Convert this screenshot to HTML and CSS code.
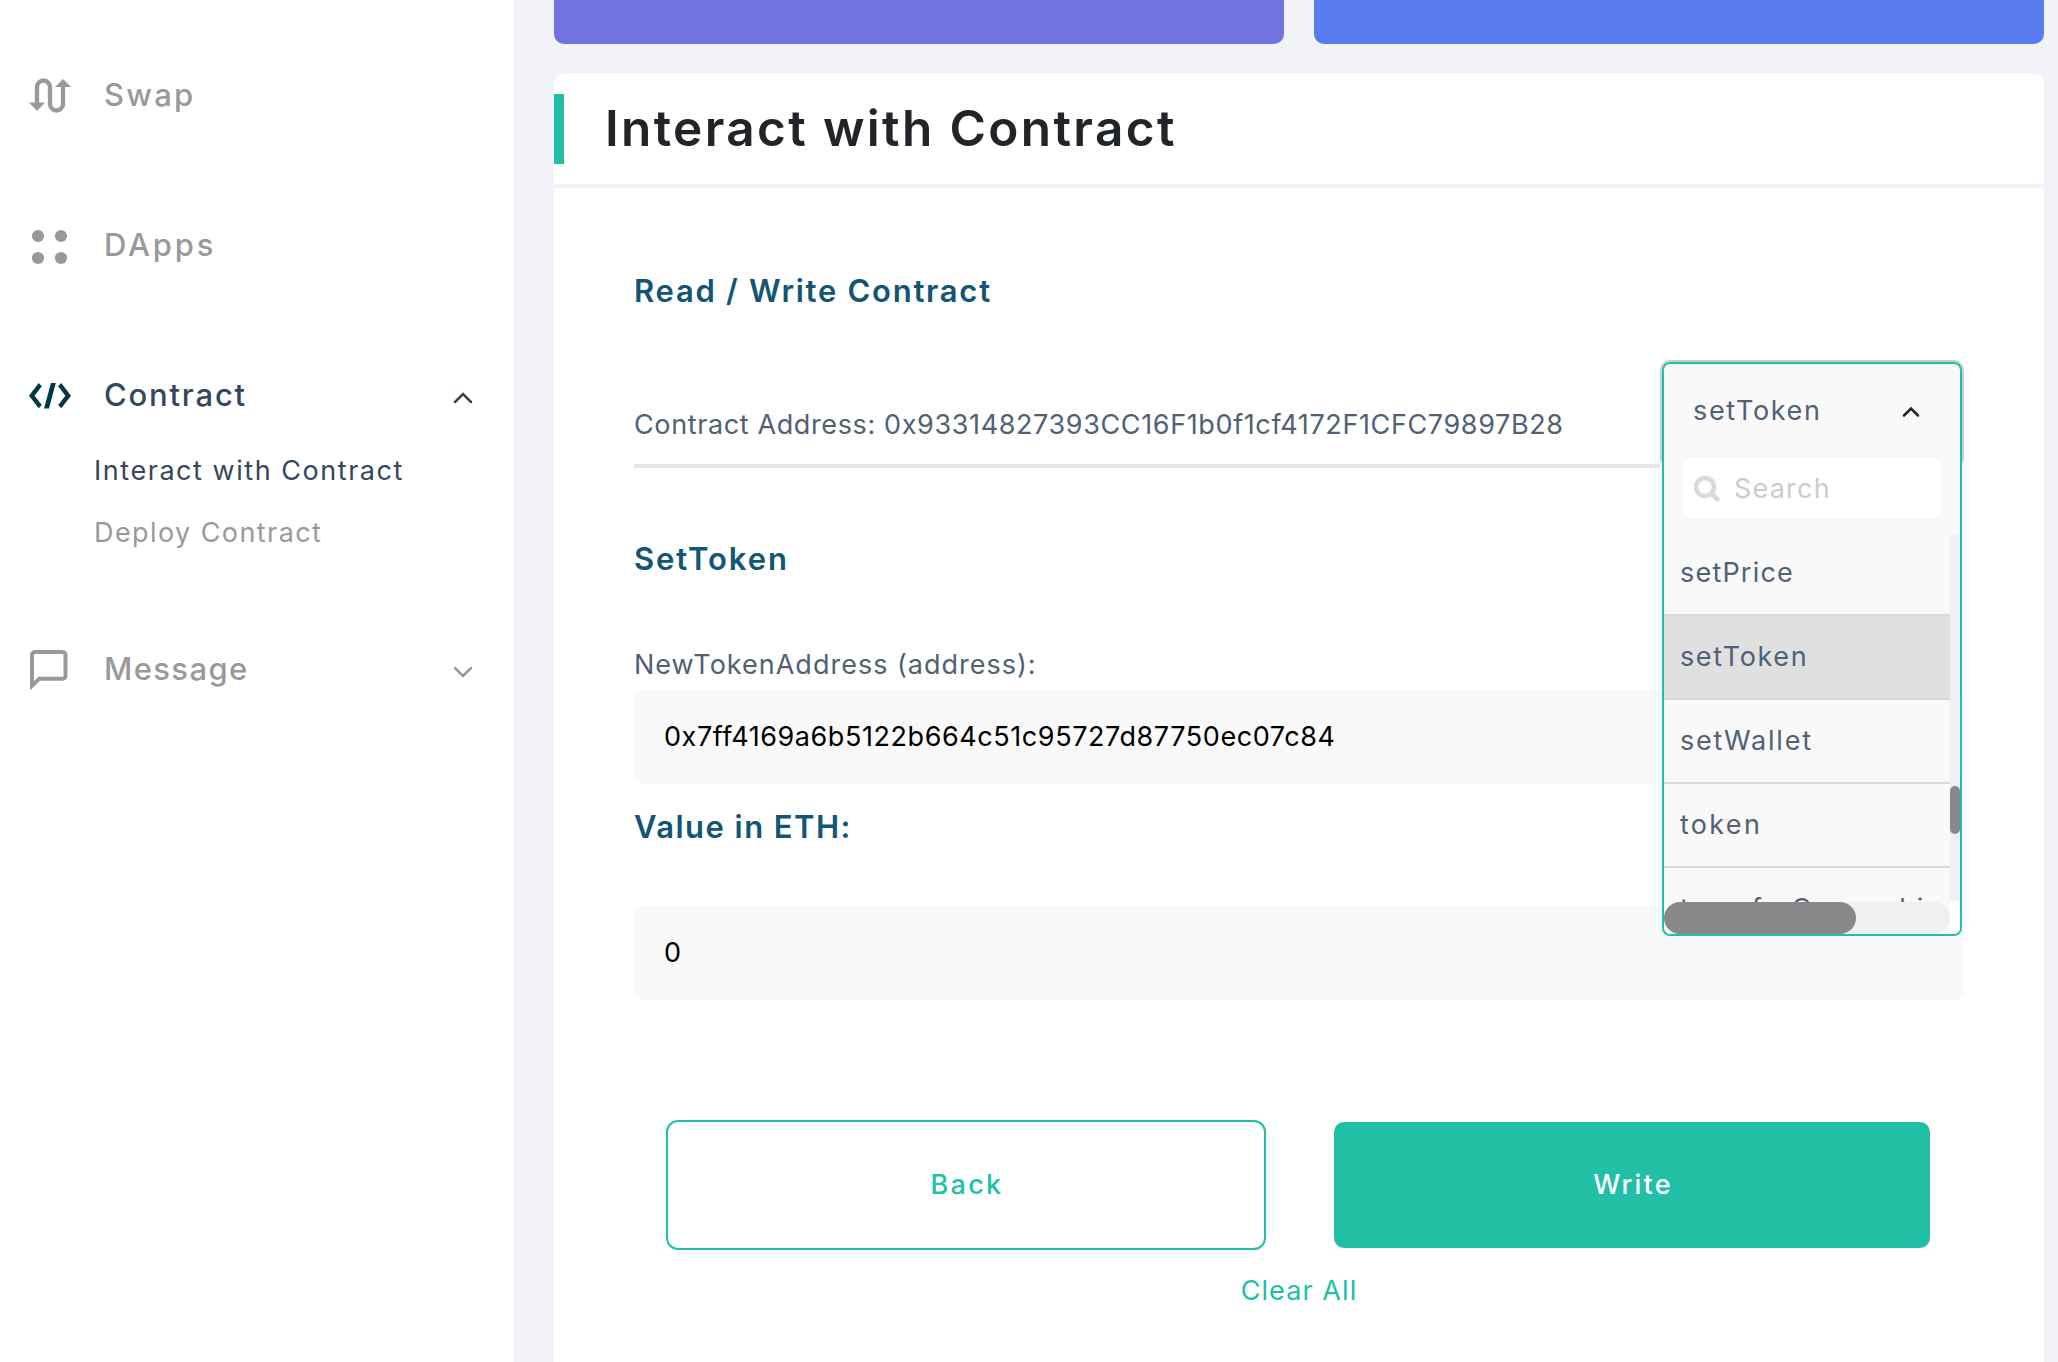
FILE: index.html
```html
<!DOCTYPE html>
<html lang="en">
<head>
<meta charset="utf-8">
<title>Interact with Contract</title>
<link rel="stylesheet" href="styles.css">
</head>
<body>
<div class="app">
  <nav class="sidebar">
    <a class="nav-item">
      <svg class="nav-icon" viewBox="0 0 42 42"><path d="M8 29V13a6.500 6.500 0 0 1 13 0V30a6.500 6.500 0 0 0 13 0V13" fill="none" stroke="currentColor" stroke-width="4.300"/><path d="M0 28.500h16L8 37zM26 13h16L34 5z" fill="currentColor"/></svg>
      <span class="ls-swap">Swap</span>
    </a>
    <a class="nav-item">
      <svg class="nav-icon" viewBox="0 0 42 42"><g fill="currentColor"><circle cx="9" cy="12" r="6.100"/><circle cx="32" cy="12" r="6.100"/><circle cx="9" cy="34" r="6.100"/><circle cx="32" cy="34" r="6.100"/></g></svg>
      <span class="ls-dapps">DApps</span>
    </a>
    <div class="nav-group">
      <a class="nav-item active">
        <svg class="nav-icon code" viewBox="0 0 42 42"><path d="M9.700 9.100l3.100 3.200-7.200 9.400 7.200 9.300-3.100 3.200L0 21.700zM32.300 9.100l-3.100 3.200 7.200 9.400-7.200 9.300 3.100 3.200L42 21.700zM22 9h4.800L20 34.500h-5z" fill="currentColor"/></svg>
        <span class="ls-contract">Contract</span>
        <svg class="nav-chevron" viewBox="0 0 20 12"><path d="M2 10l8-8 8 8" /></svg>
      </a>
      <a class="sub-item active">Interact with Contract</a>
      <a class="sub-item ls-deploy">Deploy Contract</a>
    </div>
    <a class="nav-item">
      <svg class="nav-icon" viewBox="0 0 42 42"><path d="M3 37.800V7a3 3 0 0 1 3-3H33.500a3 3 0 0 1 3 3V27.700a3 3 0 0 1-3 3H10.200z" fill="none" stroke="currentColor" stroke-width="4"/></svg>
      <span class="ls-message">Message</span>
      <svg class="nav-chevron" viewBox="0 0 20 12"><path d="M2 2l8 8 8-8" /></svg>
    </a>
  </nav>
  <main class="main">
    <div class="cards"><div class="card purple"></div><div class="card blue"></div></div>
    <section class="panel">
      <header class="panel-header"><h1>Interact with Contract</h1></header>
      <div class="panel-body">
        <h2 class="read-write">Read / Write Contract</h2>
        <div class="contract-row">
          <div class="address">Contract Address: 0x93314827393CC16F1b0f1cf4172F1CFC79897B28</div>
          <div class="select">
            <div class="dropdown">
              <div class="current"><span>setToken</span><svg viewBox="0 0 18 12"><path d="M2 9.500l7-7 7 7"/></svg></div>
              <div class="search">
                <svg viewBox="0 0 26 26"><circle cx="11" cy="11" r="9"/><path d="M17.500 17.500l6 6"/></svg>
                <span>Search</span>
              </div>
              <div class="list">
                <div class="options">
                  <div class="option ls-price">setPrice</div>
                  <div class="option selected">setToken</div>
                  <div class="option ls-wallet">setWallet</div>
                  <div class="option ls-token">token</div>
                  <div class="option ls-transfer">transferOwnership</div>
                </div>
                <div class="vtrack"><div class="vthumb"></div></div>
              </div>
              <div class="hscroll">
                <div class="htrack"><div class="hthumb"></div></div>
                <div class="corner"></div>
              </div>
            </div>
          </div>
        </div>
        <h2 class="method">SetToken</h2>
        <div class="label">NewTokenAddress (address):</div>
        <div class="input">0x7ff4169a6b5122b664c51c95727d87750ec07c84</div>
        <h2 class="value">Value in ETH:</h2>
        <div class="input eth">0</div>
        <div class="actions">
          <button class="btn back">Back</button>
          <button class="btn write">Write</button>
        </div>
        <a class="clear">Clear All</a>
      </div>
    </section>
  </main>
</div>
</body>
</html>
```
FILE: styles.css
```css
* { box-sizing: border-box; }
body { margin: 0; font-family: Inter, "Open Sans", sans-serif; font-size: 27px; overflow: hidden; }
h1, h2 { margin: 0; font-weight: 600; }
svg { display: block; flex: none; }
.app { display: flex; height: 1362px; overflow: hidden; background: #f2f3f9; }

/* Sidebar */
.sidebar { width: 514px; flex: none; padding: 65px 40px 0 29px; background: #fff; color: #999; }
.nav-item { display: flex; align-items: center; height: 60px; margin-bottom: 90px; font-size: 31px; font-weight: 500; white-space: nowrap; }
.nav-item span { padding-bottom: 2px; }
.nav-icon { width: 42px; height: 42px; margin-right: 33px; }
.nav-item.active { color: #34475b; margin-bottom: 14px; }
.nav-icon.code { color: #003945; }
.nav-chevron { width: 20px; height: 12px; margin: 5px 1px 0 auto; fill: none; stroke: currentColor; stroke-width: 2.5; stroke-linecap: round; }
.nav-group { margin-bottom: 76px; }
.sub-item { display: block; height: 62px; line-height: 64px; padding-left: 65px; letter-spacing: 1.54px; white-space: nowrap; }
.sub-item.active { color: #34475b; }
.ls-swap { letter-spacing: 2.23px; }
.ls-dapps { letter-spacing: 2.8px; }
.ls-contract { letter-spacing: 1.8px; }
.ls-message { letter-spacing: 1.38px; }
.sub-item.ls-deploy { letter-spacing: 1.42px; }

/* Main column */
.main { flex: 1; padding: 0 14px 0 40px; display: flex; flex-direction: column; gap: 30px; }
.cards { display: grid; grid-template-columns: 1fr 1fr; gap: 30px; height: 44px; flex: none; }
.card { border-radius: 0 0 10px 10px; }
.purple { background: #7173e0; }
.blue { background: #5a7bec; }
.panel { flex: 1; background: #fff; border-radius: 10px 10px 0 0; }
.panel-header { padding: 20px 0; border-bottom: 4px solid #f2f3f9; }
.panel-header h1 { height: 70px; line-height: 68px; padding-left: 41px; border-left: 10px solid #20bfa6; color: #212529; font-size: 49.5px; letter-spacing: 2.36px; white-space: nowrap; }
.panel-body { padding: 83px 80px 0; }
h2 { color: #125673; font-size: 31px; line-height: 40px; white-space: nowrap; }
.read-write { letter-spacing: 1.73px; }

.contract-row { display: flex; height: 108px; margin-top: 49px; align-items: flex-end; }
.address { flex: 1; padding-bottom: 19px; border-bottom: 4px solid #e6e6e6; line-height: 40px; color: #506175; letter-spacing: .62px; white-space: nowrap; }
.select { position: relative; width: 304px; height: 108px; border: 2px solid #ccc; border-bottom-color: transparent; border-radius: 10px; }

/* Open menu, drawn over the fields below it */
.dropdown { position: absolute; top: 0; left: 0; width: 300px; height: 574px; border: 2px solid #20bfa6; border-radius: 8px; background: #f9f9f9; color: #506175; overflow: hidden; }
.current { display: flex; justify-content: space-between; align-items: center; height: 92px; padding: 0 40px 0 29px; letter-spacing: 1.66px; }
.current svg { width: 18px; height: 12px; margin-top: 3px; fill: none; stroke: #222; stroke-width: 2.5; stroke-linecap: round; }
.search { display: flex; align-items: center; height: 60px; margin: 2px 20px 0 20px; padding-left: 10px; gap: 14px; border-radius: 8px; background: #fff; color: #ccc; letter-spacing: 1.2px; }
.search svg { width: 26px; height: 26px; margin-top: 2px; fill: none; stroke: #dadada; stroke-width: 4.5; stroke-linecap: round; }
.list { display: flex; height: 368px; margin-top: 16px; overflow: hidden; }
.options { flex: 1; min-width: 0; overflow: hidden; }
.option { height: 84px; padding-left: 16px; border-bottom: 2px solid #d9d9d9; line-height: 81px; letter-spacing: 1.62px; white-space: nowrap; }
.option:first-child { height: 82px; line-height: 77px; }
.option.selected { background: #e0e0e0; }
.option.ls-price { letter-spacing: 1.2px; }
.option.ls-wallet { letter-spacing: 1.8px; }
.option.ls-token { letter-spacing: 2.3px; }
.option.ls-transfer { letter-spacing: 1.5px; }
.vtrack { width: 10px; padding-top: 252px; background: #f0f0f0; border-radius: 5px; }
.vthumb { height: 48px; background: #888; border-radius: 5px; }
.hscroll { display: flex; height: 32px; }
.htrack { flex: 1; background: #f0f0f0; border-radius: 16px; }
.hthumb { width: 192px; height: 32px; background: #888; border-radius: 16px; }
.corner { width: 10px; background: #fff; }

.method { margin-top: 71px; letter-spacing: 1.9px; }
.label { margin-top: 65px; line-height: 41px; margin-bottom: -1px; color: #506175; letter-spacing: 1px; }
.input { height: 94px; margin-top: 6px; padding-left: 30px; line-height: 93px; background: #f9f9f9; border-radius: 8px; color: #000; letter-spacing: .57px; }
.value { margin-top: 23px; letter-spacing: 1.46px; }
.input.eth { margin-top: 59px; }

.actions { display: flex; align-items: center; gap: 68px; margin-top: 120px; padding-left: 32px; }
.btn { padding: 0 0 2px 2px; font: 500 27px Inter, "Open Sans", sans-serif; }
.back { width: 600px; height: 130px; border: 2px solid #20bfa6; border-radius: 12px; background: #fff; color: #20bfa6; letter-spacing: 2.28px; }
.write { width: 596px; height: 126px; border: 0; border-radius: 10px; background: #20bfa6; color: #fff; letter-spacing: 2.2px; }
.clear { display: block; margin-top: 20px; line-height: 41px; text-align: center; color: #20bfa6; letter-spacing: 1.08px; }
```
